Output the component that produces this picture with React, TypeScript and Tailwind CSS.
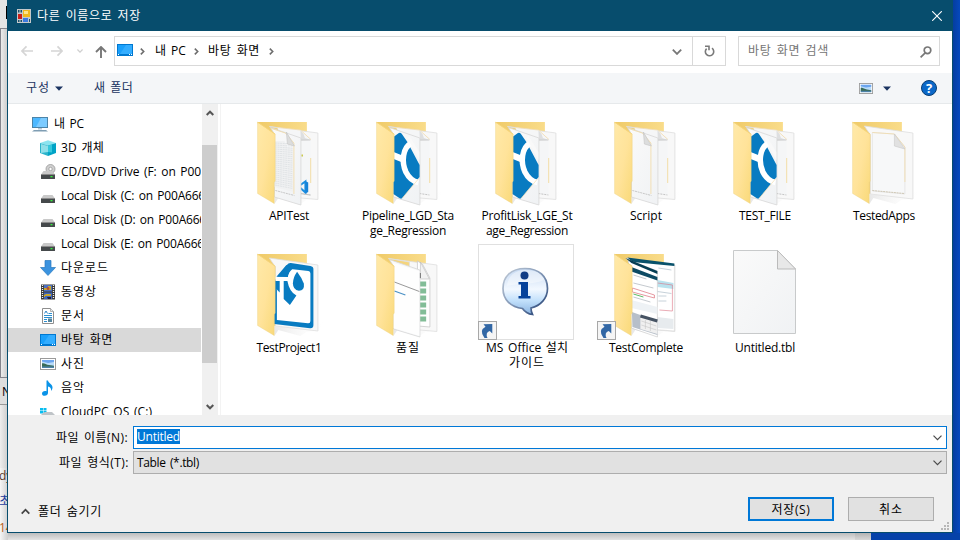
import React, { useLayoutEffect, useRef, useState } from "react";

/* Text run whose tracking is adjusted so that it spans exactly `w` pixels. */
function T({ w, children, className = "" }: { w: number; children: string; className?: string }) {
  const ref = useRef<HTMLSpanElement>(null);
  const [ls, setLs] = useState(0);
  useLayoutEffect(() => {
    if (!ref.current) return;
    const natural = ref.current.getBoundingClientRect().width;
    setLs((w - natural) / children.length);
  }, [w, children]);
  return (
    <span ref={ref} className={"inline-block whitespace-pre [word-spacing:1.5px] " + className} style={{ letterSpacing: ls }}>
      {children}
    </span>
  );
}

const Chevron = ({ className = "" }: { className?: string }) => (
  <svg className={className} width="5" height="7" viewBox="0 0 5 7" fill="none" stroke="#6d6d6d" strokeWidth="1.6">
    <path d="M.8.6 3.7 3.5.8 6.4" />
  </svg>
);

const DesktopIcon = () => (
  <svg width="16" height="12" viewBox="0 0 16 12">
    <rect width="16" height="12" fill="#0078d0" />
    <rect x="1" y="1" width="14" height="9" fill="#1aa0fb" />
    <path d="M9 1h6v9H3z" fill="#33adff" />
    <path d="M1 10.5h1M12 10.5h1M14 10.5h1" stroke="#fff" />
  </svg>
);

const PictureIcon = ({ small = false }: { small?: boolean }) => (
  <svg width={small ? 14 : 16} height={small ? 11 : 12} viewBox="0 0 16 12" preserveAspectRatio="none">
    <rect x=".5" y=".5" width="15" height="11" fill="#fff" stroke="#9a9a9a" />
    <rect x="2" y="2" width="12" height="8" fill="#b9dcfa" />
    <path d="M2 2h12v2L8 5 2 3.500z" fill="#6ba5ef" />
    <path d="M2 5.500c2-1 4 1.500 7 1.500l5 .8V9H2z" fill="#396b58" />
    <path d="M2 8.500h12V10H2z" fill="#4d83a9" />
  </svg>
);

const PcIcon = () => (
  <svg width="16" height="16" viewBox="0 0 16 16">
    <rect x=".5" y="1.500" width="15" height="10" fill="#4db8ff" stroke="#4c84a8" />
    <path d="M9 2h6v9H4z" fill="#7ccbff" />
    <path d="M6 12h4v1.500H6z" fill="#b9c9d6" />
    <path d="M2 14h12l2 1.500H0z" fill="#7f9db3" />
  </svg>
);

const CubeIcon = () => (
  <svg width="16" height="16" viewBox="0 0 16 16">
    <path d="M0 3 8 .3 16 3 8 5.500z" fill="#8be4ef" />
    <path d="M0 3l8 2.500V16L0 13z" fill="#2bb4cb" />
    <path d="M8 5.500 16 3v10l-8 3z" fill="#00a3c6" />
    <path d="M1 4 8 6v6L1 13z" fill="#8fdfe9" />
    <path d="M8 5.500 12 4.500v8L8 12z" fill="#35c8dc" />
  </svg>
);

const DriveIcon = ({ disc = false }: { disc?: boolean }) => (
  <svg width="16" height="16" viewBox="0 0 16 16">
    {disc && (
      <>
        <circle cx="10.500" cy="5" r="4.500" fill="#cfcfcf" stroke="#9b9b9b" strokeWidth=".8" />
        <circle cx="10.500" cy="5" r="1.700" fill="#fff" stroke="#909090" strokeWidth=".7" />
      </>
    )}
    <path d="M3.500 7h9l2.500 3.500H1z" fill="#c9c9c9" />
    <rect x="1" y="10" width="14" height="5" rx=".5" fill="#45494b" />
    <path d="M1 10.500h14" stroke="#8b8b8b" />
    <rect x="10.500" y="12" width="2" height="1.300" fill="#35f03e" />
  </svg>
);

const DownIcon = () => (
  <svg width="16" height="16" viewBox="0 0 16 16">
    <path d="M5 .5h6v7h4.500L8 15.500.5 7.500H5z" fill="#3b93df" stroke="#2878bf" strokeWidth=".7" />
  </svg>
);

const FilmIcon = () => (
  <svg width="16" height="16" viewBox="0 0 16 16">
    <rect x="1" y=".5" width="14" height="15" fill="#383838" />
    <path d="M2.500 1v14M13.500 1v14" stroke="#f2f2f2" strokeWidth="1.300" strokeDasharray="1 1" />
    <rect x="4" y="1" width="8" height="6.500" fill="#4a70c2" />
    <rect x="4" y="8.500" width="8" height="6.500" fill="#3f66bd" />
    <path d="M4 4h4V2h3v4H4zM6 10h5v2H5v1H4v-2z" fill="#c8a52d" />
    <circle cx="8" cy="4.500" r="1.400" fill="#b74a3a" />
    <path d="M7 13h4v2H8z" fill="#211f32" />
  </svg>
);

const DocIcon = () => (
  <svg width="16" height="16" viewBox="0 0 16 16">
    <path d="M2.500.5h8L13.500 3.500v12h-11z" fill="#fff" stroke="#8e8e8e" />
    <path d="M10.500.5v3h3" fill="#e8e8e8" stroke="#a0a0a0" strokeWidth=".8" />
    <path d="M4.500 5.500 6 3l1.500 2.500" fill="none" stroke="#2d84c6" />
    <path d="M8.500 5.500H12M4 7.500h8M4 9.500h8M4 11.500h3M4 13.500h3" stroke="#2d8fd0" />
    <rect x="8" y="10.500" width="4" height="3.500" fill="#54849d" />
  </svg>
);

const MusicIcon = () => (
  <svg width="16" height="16" viewBox="0 0 16 16">
    <path d="M6.500.5H8c.4 3 4.500 3.500 4.500 7 0 1.600-.7 2.700-1.500 3.500.5-3-.7-4-3-4.600V13c0 1.600-1.500 2.700-3.300 2.700S2 14.800 2 13.400 3.300 11 5 11c.6 0 1.100.1 1.500.3z" fill="#0a93e8" />
  </svg>
);

const CloudIcon = () => (
  <svg width="16" height="16" viewBox="0 0 16 16">
    <path d="M0 4h3v2.500H0zM3.500 4h3v2.500h-3zM0 7h3v2.500H0zM3.500 7h3v2.500h-3z" fill="#08bdf0" />
    <path d="M5 8h7l3 3H1l2-2z" fill="#bfc4c8" />
    <rect x="1" y="11" width="14" height="4" fill="#777" />
  </svg>
);

function Shell({ children, single = false }: { children?: React.ReactNode; single?: boolean }) {
  return (
    <svg width="96" height="96" viewBox="-.4 0 96 96" className="block">
      <defs>
        <linearGradient id="flap" x1="0" x2="1" y1="0" y2="1">
          <stop offset="0" stopColor="#ffe9a8" />
          <stop offset=".5" stopColor="#ffe39a" />
          <stop offset="1" stopColor="#f9d978" />
        </linearGradient>
        <linearGradient id="back">
          <stop offset="0" stopColor="#efca68" />
          <stop offset="1" stopColor="#f9dc8a" />
        </linearGradient>
        <linearGradient id="sheet" x1="0" x2="1" y1="0" y2="1">
          <stop offset="0" stopColor="#fafafa" />
          <stop offset="1" stopColor="#f0f2f4" />
        </linearGradient>
        <linearGradient id="shade">
          <stop offset="0" stopColor="#c4c4c4" />
          <stop offset="1" stopColor="#fff" stopOpacity="0" />
        </linearGradient>
      </defs>
      <path d="M34 92 38 86 60 92 66 88 78 87 86 77 76 80 60 84 34 82z" fill="url(#shade)" opacity=".4" />
      <path d="M17 10h49.500v72H34z" fill="url(#back)" />
      <path d={single ? "M29 14 77.500 21v66L35 82V23z" : "M29 14.500 77.500 21v66.500L50 85V18z"} fill="#f8f8f8" stroke="#dedede" strokeWidth=".8" />
      {children}
      <path d="M17.200 10.200 34.800 22v47l-1 1.500v21L17.200 81.500z" fill="url(#flap)" stroke="#eccf78" strokeWidth=".4" />
      <path d="M17.500 10.300 34.500 22" stroke="#f6d477" strokeWidth=".8" />
    </svg>
  );
}

const RearFold = () => (
  <>
    <path d="M37 15.500 60 18l10.500 9.500V83L59 82" fill="#f5f6f7" />
    <path d="M37 15.500 60 18l10.500 9.500" fill="none" stroke="#f2dbad" strokeWidth=".8" />
    <path d="M60 18q4 4 4.500 8l6 2-10 .500z" fill="#dedfe0" />
    <path d="M60.500 28H70" stroke="#c6c6c6" strokeWidth=".8" />
    <path d="M70.300 46v25" stroke="#f2dda7" />
    <path d="M60 81.500 70 83" stroke="#c4c4c4" strokeDasharray="2 1" />
  </>
);

const FrontSheet = ({ children }: { children?: React.ReactNode }) => (
  <>
    <path d="M30 15.500 60.500 26v67L34 85V22z" fill="url(#sheet)" stroke="#d7d7d7" strokeWidth=".8" />
    {children}
  </>
);

const FoldedPage = () => (
  <>
    <path d="M31 16.500 45 21l8.500 10V82" fill="none" stroke="#f1d9a4" strokeWidth=".8" />
    <path d="M46 20l1 12 7 2z" fill="#dcdddd" stroke="#c5c5c5" strokeWidth=".6" />
    <path d="M35 78.500 54 83.500" stroke="#bbb" strokeWidth=".8" strokeDasharray="2 .7" />
  </>
);

const LogoFolder = () => (
  <Shell>
    <RearFold />
    <FrontSheet>
      <path d="M34 25 39.500 21q1.800-.8 3 1L48 30 60.200 53V65L43 86q-1.500 1-3 0L34 82z" fill="#087bc1" />
      <path d="M33 43 43 47" fill="none" stroke="#fff" strokeWidth="6.500" />
      <path d="M52 31C43 36 42 50 46.500 60Q51 69 59 70.500" fill="none" stroke="#fff" strokeWidth="5.500" />
      <path d="M48 26 60 48V40L50 24z" fill="#f9f9f9" />
      <path d="M59 67 43 86" stroke="#f4dfb3" strokeWidth=".7" />
    </FrontSheet>
  </Shell>
);

const ApiFolder = () => (
  <Shell>
    <RearFold />
    <path d="M60 70.500 65.500 67.500v0L65.500 81 60 77" fill="none" />
    <path d="M60 73 65 69.500v11L60 76" fill="none" stroke="#1c8fe0" strokeWidth="2" />
    <path d="M65 69l2.800 1.500v9.500L65 81.500z" fill="#1683d8" />
    <path d="M60 81.500 70 83" stroke="#c4c4c4" />
    <path d="M61 43.500h1.500" stroke="#c8c538" strokeWidth="2" />
    <FrontSheet>
      <path d="M34 29h10l3 6 6 1v44l-19-5z" fill="#f0f1f2" />
      {Array.from({ length: 22 }, (_, i) => (
        <path key={i} d={`M34.500 ${31 + i * 2}l18 ${1 + i * 0.12}`} stroke="#d9dcdf" strokeWidth=".7" strokeDasharray="2 .6" />
      ))}
      <FoldedPage />
    </FrontSheet>
  </Shell>
);

const ScriptFolder = () => (
  <Shell>
    <RearFold />
    <FrontSheet><FoldedPage /></FrontSheet>
  </Shell>
);

const AppsFolder = () => (
  <Shell single>
    <path d="M37 20.500 59 22 69.500 35v47L37 79z" fill="#f7f8f9" stroke="#dcdcdc" strokeWidth=".6" />
    <path d="M37 20.500 59 22l10.500 13v35" fill="none" stroke="#f1daaa" strokeWidth=".8" />
    <path d="M59 22v12l10.500 3z" fill="#e1e1e1" stroke="#c9c9c9" strokeWidth=".6" />
    <path d="M37 78.500 69 81.500" stroke="#c6bda5" strokeWidth=".8" strokeDasharray="2 .7" />
  </Shell>
);

const ProjectFolder = () => (
  <Shell single>
    <path d="M46.500 21q1.500-2.300 4-2L70 22q3 .5 3 3v56q0 3.500-3.500 3.200L34 80V37z" fill="#087bc1" />
    <path d="M50 25 68 27q2 .3 2 2.500V77q0 2.500-2.500 2.200L36.500 76V46L35 37v-4.500H47z" fill="#fff" />
    <path d="M36 32.700 46 21 52 25q-4 3-4.500 8z" fill="#087bc1" />
    <path d="M43.300 37H47q2 11 9 14.500L49.500 61 43.300 55z" fill="#087bc1" />
    <path d="M56.700 27.700q5 6.500 6.800 12 .8 7-5 7-6-1-6-7.500.2-6 4.200-11.500z" fill="#087bc1" />
    <path d="M34 37h5.300v11.500L34 43z" fill="#087bc1" />
  </Shell>
);

const QualityFolder = () => (
  <Shell>
    <path d="M58 17 63 20l7.500 14v49l-12-1z" fill="#fff" stroke="#c9c9c9" strokeWidth=".8" />
    <path d="M61 18v17h9z" fill="#f2f2f2" stroke="#bbb" strokeWidth=".6" />
    <path d="M63.500 37.500v40" stroke="#82bd97" strokeWidth="6.500" strokeDasharray="5 2" />
    <FrontSheet>
      <path d="M34 19 60 27v65l-26-8z" fill="#fefefe" />
      <path d="m35 38 25 9.500" stroke="#999" />
      <path d="m35 47 11 4" stroke="#4b91c5" strokeWidth="1.200" />
      <path d="M61 29v5" stroke="#777" />
    </FrontSheet>
  </Shell>
);

const ShortcutArrow = () => (
  <svg width="19" height="19" viewBox="0 0 19 19" className="absolute bottom-0 left-0">
    <rect x=".5" y=".5" width="18" height="18" fill="#f5f5f5" stroke="#a8a8a8" />
    <path d="M6.500 17Q.500 9.500 7.500 5.800L5.500 3.300 14.300 3v9.500L11.800 10Q7 11.500 9.500 17z" fill="#3267a5" />
  </svg>
);

const CompleteFolder = () => (
  <div className="relative">
    <Shell>
      <path d="M30 14 77 21v66l-27-2z" fill="#fff" stroke="#d5d5d5" strokeWidth=".6" />
      <path d="M30 13.500 77 19.500v2.500L35 18z" fill="#09526b" />
      <path d="M60 36 76 39v6l-16-2z" fill="#b9e2ee" />
      <path d="M61 24 74 26M60 47.500 74 49.500M61 52h8M61 57h8" stroke="#c7d2da" />
      <path d="M60 39l15 2v26l-13-1" fill="none" stroke="#dc7484" strokeWidth=".6" />
      <path d="M60 73 76 75v10l-16-1z" fill="#e7ebee" />
      <path d="M31 16 60 27v66l-26-9z" fill="#fff" stroke="#c5c5c5" strokeWidth=".6" />
      <path d="M28 14 60 27v3L34 19z" fill="#063e54" />
      <path d="M34 23 60 33v3.500l-26-9z" fill="#0d4a63" />
      <path d="M36 31 49 35M36 39 56 44M36 53 53 58" stroke="#c5cacf" />
      <path d="M35 44l22 7v3l-22-6z" fill="none" stroke="#e07f89" strokeWidth=".8" />
      <path d="M36 50 46 53" stroke="#5dbd65" />
      <path d="M34 56 60 63v7l-26-6z" fill="#eef2f5" />
      <path d="M34.500 68 60 77v14l-25-8z" fill="#b7bfc9" />
      <path d="M43 71 60 76v14l-17-5z" fill="#f0f0f0" />
      <path d="M43 72 60 77" stroke="#465363" strokeWidth="3" />
      <path d="M44 77l15 5M44 81l15 5M48 76v9M53 77v10" stroke="#c5c5c5" strokeWidth=".6" />
    </Shell>
    <ShortcutArrow />
  </div>
);

const InfoIcon = () => (
  <div className="relative h-24 w-24 border border-[#e0e0e0]">
    <svg width="94" height="94" viewBox="1 1 94 94">
      <defs>
        <linearGradient id="bubble" x2="0" y2="1">
          <stop stopColor="#c6d9f2" />
          <stop offset=".45" stopColor="#f2f8ff" />
          <stop offset=".7" stopColor="#c2e0fb" />
          <stop offset="1" stopColor="#8ab4e2" />
        </linearGradient>
        <linearGradient id="rim" x2="1" y2="1">
          <stop stopColor="#c2ccd8" />
          <stop offset=".5" stopColor="#8196b5" />
          <stop offset="1" stopColor="#17366c" />
        </linearGradient>
      </defs>
      <path d="M47 24.500c14 0 22.500 8 22.500 20 0 10-7 17-16.500 19.500 0 3 .5 4.500 1.500 6.500-4-.5-8-3-10-6-12-1.500-19.500-9-19.500-20 0-12 8-20 22-20z" fill="url(#bubble)" stroke="url(#rim)" strokeWidth="1.700" />
      <path d="M47 26c11 0 18 4 19 10-10 5-28 3-37 6 1-10 8-16 18-16z" fill="#fff" opacity=".4" />
      <circle cx="46.500" cy="31.500" r="4" fill="#123d85" />
      <path d="M40.500 38h9.500v14h2.500v2.500h-12V52H43V40.500h-2.500z" fill="#07439b" />
    </svg>
    <div className="absolute -bottom-px -left-px h-[19px] w-[19px]"><ShortcutArrow /></div>
  </div>
);

const FileIcon = () => (
  <svg width="96" height="96" viewBox="0 0 96 96">
    <path d="M17.500 6.500h44l18 18.500v64.500h-62z" fill="url(#sheet)" stroke="#c8cacb" />
    <path d="M61.500 6.500V25h18z" fill="#e8e8e8" stroke="#bbb" />
  </svg>
);

const tree: [React.ReactNode, string, number][] = [
  [<CubeIcon />, "3D 개체", 43],
  [<DriveIcon disc />, "CD/DVD Drive (F: on P00", 140],
  [<DriveIcon />, "Local Disk (C: on P00A666", 144],
  [<DriveIcon />, "Local Disk (D: on P00A666", 145],
  [<DriveIcon />, "Local Disk (E: on P00A666", 143],
  [<DownIcon />, "다운로드", 48],
  [<FilmIcon />, "동영상", 36],
  [<DocIcon />, "문서", 24],
  [<DesktopIcon />, "바탕 화면", 52],
  [<PictureIcon />, "사진", 24],
  [<MusicIcon />, "음악", 24],
  [<CloudIcon />, "CloudPC OS (C:)", 91],
];

const files: [React.ReactNode, [string, number][]][] = [
  [<ApiFolder />, [["APITest", 40]]],
  [<LogoFolder />, [["Pipeline_LGD_Sta", 92], ["ge_Regression", 76]]],
  [<LogoFolder />, [["ProfitLisk_LGE_St", 91], ["age_Regression", 82]]],
  [<ScriptFolder />, [["Script", 32]]],
  [<LogoFolder />, [["TEST_FILE", 52]]],
  [<AppsFolder />, [["TestedApps", 62]]],
  [<ProjectFolder />, [["TestProject1", 65]]],
  [<QualityFolder />, [["품질", 24]]],
  [<InfoIcon />, [["MS Office 설치", 82], ["가이드", 36]]],
  [<CompleteFolder />, [["TestComplete", 74]]],
  [<FileIcon />, [["Untitled.tbl", 60]]],
];

const Drop = () => (
  <svg width="9" height="6" viewBox="0 0 9 6" fill="none" stroke="#4a4a4a" strokeWidth="1.200"><path d="M.5.7 4.500 4.700 8.500.7" /></svg>
);
const Caret = () => <svg width="8" height="5" viewBox="0 0 8 5"><path d="M0 .5h8L4 4.700z" fill="#1a3360" /></svg>;

export default function App() {
  return (
    <div className="relative h-[540px] w-[960px] overflow-hidden bg-[#f4f4f4] text-[12px] leading-[15px] text-black [font-family:'Open_Sans','Noto_Sans_CJK_KR',sans-serif]">
      {/* windows behind the dialog */}
      <div className="absolute left-0 top-0 h-[28px] w-2 bg-[#e4e4e4]"><div className="ml-[6px] mt-[6px] h-[13px] w-px bg-black" /></div>
      <div className="absolute left-0 top-[28px] h-[350px] w-2 border-y border-l border-[#84848c] bg-gradient-to-r from-[#ececec] to-[#c9c9c9]" />
      <div className="absolute left-0 top-[378px] h-[27px] w-2 overflow-hidden border-b border-[#999] bg-[#dedede] pl-[2px] pt-[6px]">N</div>
      <div className="absolute left-0 top-[405px] h-[64px] w-2 border-b border-[#aaa] bg-gradient-to-r from-[#eee] to-[#ccc]" />
      <div className="absolute left-0 top-[468px] h-[72px] w-2 overflow-hidden whitespace-nowrap bg-gradient-to-r from-[#f6f6f6] to-[#cfcfcf]">
        <div className="-ml-px text-[#5a3a2a]">dy</div>
        <div className="-ml-px mt-[10px] text-[#1c3c9c]">초</div>
        <div className="-ml-px mt-[12px] text-[#b8621c]">14</div>
      </div>
      <div className="absolute left-2 top-[533px] flex h-[7px] w-[863px] justify-end bg-gradient-to-b from-[#bdbdbd] to-[#e4e4e4]"><div className="w-4 bg-black/5" /></div>
      <div className="absolute right-0 top-0 h-[540px] w-[8px] bg-gradient-to-r from-[#043c9c] to-[#0649be]" />
      <div className="absolute right-0 top-[533px] h-[7px] w-[89px] bg-[#0642a9]" />

      <div className="absolute left-[7px] top-0 flex h-[533px] w-[946px] flex-col border-x border-b border-[#074d6d] bg-white">
        <header className="flex h-[31px] shrink-0 items-center bg-[#074d6d] pl-[9px] pr-[10px] text-white">
          <svg width="14" height="14" viewBox="0 0 14 14">
            <rect width="14" height="14" fill="#c4c8ca" />
            <path d="M1 1h1.500v2.500H1zM3.500 1H5v2.500H3.500zM1 11h1.500v2H1zM3.500 11H5v2H3.500zM12 10h1v3h-1z" fill="#1b506a" />
            <rect x="1" y="5" width="4" height="5" fill="#c91f18" />
            <rect x="6" y="1" width="7" height="7" fill="#f0b91d" /><path d="M7 2h4v3H7z" fill="#ffe38a" />
            <rect x="6" y="9" width="5" height="4" fill="#3c7ae0" />
          </svg>
          <T w={104} className="ml-[6px]">다른 이름으로 저장</T>
          <svg className="ml-auto" width="10" height="10" viewBox="0 0 10 10" stroke="#fff" strokeWidth="1.100"><path d="m.2.2 9.600 9.600M9.800.2.2 9.800" /></svg>
        </header>

        <nav className="flex h-[42px] shrink-0 items-start pt-[5px]">
          <div className="flex h-[30px] w-[106px] items-center pl-[13px]">
            <svg width="12" height="12" viewBox="0 0 12 12" fill="none" stroke="#d5d5d5" strokeWidth="1.700"><path d="M12 6H1M5.500 1.300.9 6l4.600 4.700" /></svg>
            <svg className="ml-[18px]" width="12" height="12" viewBox="0 0 12 12" fill="none" stroke="#d5d5d5" strokeWidth="1.700"><path d="M0 6h11M6.500 1.300 11.100 6l-4.600 4.700" /></svg>
            <svg className="ml-[14px]" width="6" height="4" viewBox="0 0 6 4" fill="none" stroke="#d0d0d0" strokeWidth="1.300"><path d="m.4.500 2.600 2.600L5.600.500" /></svg>
            <svg className="ml-[12px] mt-[2px]" width="12" height="12" viewBox="0 0 12 12" fill="none" stroke="#777" strokeWidth="1.900"><path d="M6 12V1M1 6 6 1l5 5" /></svg>
          </div>
          <div className="flex h-[30px] w-[612px] items-center border border-[#d9d9d9] pl-[2px]">
            <div className="-mt-[3px]"><DesktopIcon /></div>
            <Chevron className="ml-[7px]" />
            <T w={31} className="-mt-[2px] ml-[10px]">내 PC</T>
            <Chevron className="ml-[8px]" />
            <T w={52} className="-mt-[2px] ml-[9px]">바탕 화면</T>
            <Chevron className="ml-[9px]" />
            <svg className="ml-auto mr-[10px] mt-[2px]" width="10" height="6" viewBox="0 0 10 6" fill="none" stroke="#777" strokeWidth="1.800"><path d="M.8.700 5 4.900 9.200.700" /></svg>
            <div className="flex h-full w-[33px] items-center justify-center border-l border-[#d9d9d9]">
              <svg width="11" height="12" viewBox="0 0 11 12" fill="none" stroke="#7a7a7a" strokeWidth="1.600"><path d="M8 3.200a4.200 4.200 0 1 1-5.400.4M1 1.200h4v4" /></svg>
            </div>
          </div>
          <div className="ml-3 flex h-[30px] w-[202px] items-center border border-[#d9d9d9] pl-[9px] pr-[7px] text-[#757575]">
            <T w={81} className="-mt-[2px]">바탕 화면 검색</T>
            <svg className="ml-auto mt-[2px]" width="12" height="12" viewBox="0 0 12 12" fill="none" stroke="#777" strokeWidth="1.700"><circle cx="7.500" cy="4.300" r="3.300" /><path d="M5.200 6.800.6 11.400" /></svg>
          </div>
        </nav>

        <div className="flex h-[31px] shrink-0 items-center border-b border-[#e6e9eb] bg-[#f4f6f8] pl-[18px] pr-[15px] text-[#1a3360]">
          <T w={24} className="-mt-px">구성</T><span className="ml-[5px]"><Caret /></span>
          <T w={39} className="-mt-px ml-[31px]">새 폴더</T>
          <span className="ml-auto"><PictureIcon small /></span>
          <span className="ml-[10px] mr-[30px]"><Caret /></span>
          <span className="flex h-4 w-4 items-center justify-center rounded-full border border-[#083e73] bg-[#0b68c8] text-[13px] font-bold text-white">?</span>
        </div>

        <div className="flex h-[311px] shrink-0">
          <aside className="h-full w-[193px] overflow-hidden pt-2">
            <div className="flex h-6 items-center pl-6"><PcIcon /><T w={30} className="-mt-[2px] ml-[6px]">내 PC</T></div>
            {tree.map(([icon, label, w], i) => (
              <div key={i} className={"flex h-6 items-center pl-8 " + (i === 8 ? "bg-[#d9d9d9]" : "")}>
                <span className="w-4 shrink-0">{icon}</span><T w={w} className="-mt-[2px] ml-[5px]">{label}</T>
              </div>
            ))}
          </aside>
          <div className="ml-px flex w-4 flex-col items-center bg-[#f0f0f0]">
            <div className="flex h-[41px] pt-[6px]"><svg width="8" height="6" viewBox="0 0 8 6" fill="none" stroke="#555" strokeWidth="2"><path d="M.7 5 4 1.700 7.300 5" /></svg></div>
            <div className="h-[218px] w-[15px] self-start bg-[#cdcdcd]" />
            <div className="flex flex-1 items-end pb-[5px]"><svg width="8" height="6" viewBox="0 0 8 6" fill="none" stroke="#555" strokeWidth="2"><path d="M.7 1 4 4.300 7.300 1" /></svg></div>
          </div>
          <main className="ml-[2px] grid flex-1 auto-rows-[132px] grid-cols-[repeat(6,119px)] content-start border-l border-[#f3f3f3] pl-2 pt-2">
            {files.map(([icon, lines], i) => (
              <div key={i} className="flex flex-col">
                <div className="ml-[11px] h-24 w-24">{icon}</div>
                <div className="flex flex-col items-center pl-px">
                  {lines.map(([s, w]) => <T key={s} w={w}>{s}</T>)}
                </div>
              </div>
            ))}
          </main>
        </div>

        <footer className="flex flex-1 flex-col bg-[#f0f0f0] pt-[11px]">
          <div className="flex h-[23px] items-center">
            <div className="flex w-[125px] justify-end pr-[5px]"><T w={72}>파일 이름(N):</T></div>
            <div className="flex h-[23px] w-[814px] items-center justify-between border border-[#0078d7] bg-white pl-[3px] pr-1">
              <T w={43} className="-mt-[2px] bg-[#0078d7] text-white">Untitled</T><Drop />
            </div>
          </div>
          <div className="mt-[2px] flex h-[23px] items-center">
            <div className="flex w-[125px] justify-end pr-[4px]"><T w={70}>파일 형식(T):</T></div>
            <div className="flex h-[23px] w-[814px] items-center justify-between border border-[#adadad] bg-[#e1e1e1] pl-[3px] pr-1">
              <T w={62}>Table (*.tbl)</T><Drop />
            </div>
          </div>
          <div className="mt-[23px] flex items-start pl-[13px]">
            <svg className="mt-[11px]" width="9" height="7" viewBox="0 0 9 7" fill="none" stroke="#444" strokeWidth="1.800"><path d="m.7 5.700 3.800-4 3.800 4" /></svg>
            <T w={64} className="ml-[8px] mt-[7px]">폴더 숨기기</T>
            <button className="ml-auto h-6 w-[86px] border-2 border-[#0078d7] bg-[#e1e1e1]"><T w={39}>저장(S)</T></button>
            <button className="ml-[14px] h-6 w-[86px] border border-[#adadad] bg-[#e1e1e1]"><T w={24}>취소</T></button>
            <svg className="ml-[7px] mr-[3px] mt-[25px]" width="8" height="8" viewBox="0 0 8 8" fill="#b7b7b7"><path d="M6 0h2v2H6zM3 3h2v2H3zM6 3h2v2H6zM0 6h2v2H0zM3 6h2v2H3zM6 6h2v2H6z" /></svg>
          </div>
        </footer>
      </div>
    </div>
  );
}
